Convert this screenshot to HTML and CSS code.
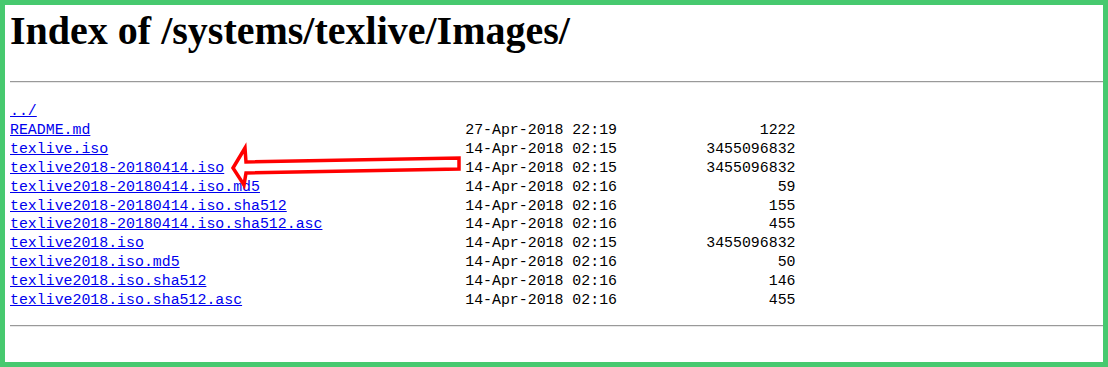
FILE: index.html
```html
<!DOCTYPE html>
<html>
<head>
    <meta charset="UTF-8">
    <title>Index of /systems/texlive/Images/</title>
    <link rel="stylesheet" href="styles.css">
</head>
<body>
    <div class="frame">
        <h1>Index of /systems/texlive/Images/</h1>
        <hr>
        <div class="listing">
            <a href="../">../</a><span></span><span></span>
            <a href="README.md">README.md</a><span>27-Apr-2018 22:19</span><span class="size">1222</span>
            <a href="texlive.iso">texlive.iso</a><span>14-Apr-2018 02:15</span><span class="size">3455096832</span>
            <a href="texlive2018-20180414.iso">texlive2018-20180414.iso</a><span>14-Apr-2018 02:15</span><span class="size">3455096832</span>
            <a href="texlive2018-20180414.iso.md5">texlive2018-20180414.iso.md5</a><span>14-Apr-2018 02:16</span><span class="size">59</span>
            <a href="texlive2018-20180414.iso.sha512">texlive2018-20180414.iso.sha512</a><span>14-Apr-2018 02:16</span><span class="size">155</span>
            <a href="texlive2018-20180414.iso.sha512.asc">texlive2018-20180414.iso.sha512.asc</a><span>14-Apr-2018 02:16</span><span class="size">455</span>
            <a href="texlive2018.iso">texlive2018.iso</a><span>14-Apr-2018 02:15</span><span class="size">3455096832</span>
            <a href="texlive2018.iso.md5">texlive2018.iso.md5</a><span>14-Apr-2018 02:16</span><span class="size">50</span>
            <a href="texlive2018.iso.sha512">texlive2018.iso.sha512</a><span>14-Apr-2018 02:16</span><span class="size">146</span>
            <a href="texlive2018.iso.sha512.asc">texlive2018.iso.sha512.asc</a><span>14-Apr-2018 02:16</span><span class="size">455</span>
        </div>
        <hr>

        <!-- стрелка поверх списка -->
        <svg class="arrow" width="240" height="55" viewBox="0 0 240 55">
            <polygon points="8,28 20,8 21,22 234,18 234,29 21,33 19,45" fill="#fff" stroke="#f00" stroke-width="3.5" stroke-linejoin="miter"/>
        </svg>
    </div>
</body>
</html>
```

FILE: styles.css
```css
body {
    margin: 0;
    background: #fff;
}
.frame {
    position: relative;
    height: 367px;
    box-sizing: border-box;
    border: 5px solid #47c96f;
    padding-left: 5px;
    overflow: hidden;
}
h1 {
    font-family: 'Liberation Serif', serif;
    font-size: 40px;
    font-weight: bold;
    color: #000;
    margin: 3px 0 27px 0;
    line-height: 46px;
}
hr {
    margin: 0;
    border: none;
    border-top: 1px solid #999;
    border-bottom: 1px solid #e8e8e8;
    height: 0;
}
.listing {
    display: grid;
    grid-template-columns: 51ch 17ch 20ch;
    font-family: 'Liberation Mono', monospace;
    font-size: 14.88px;
    line-height: 18.9px;
    color: #000;
    margin: 19px 0 15px 0;
}
.listing a {
    color: #0000ee;
}
.size {
    text-align: right;
}
.arrow {
    position: absolute;
    left: 220px;
    top: 135px;
}
```
